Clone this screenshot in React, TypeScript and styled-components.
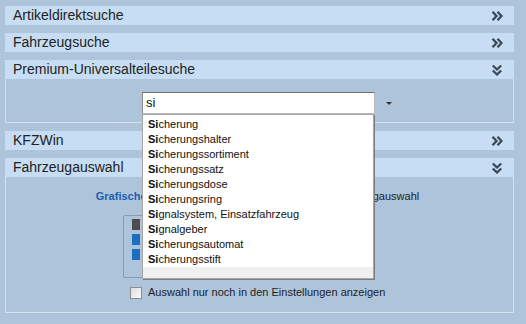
import styled, { createGlobalStyle } from "styled-components";

const Global = createGlobalStyle`
  html, body {
    margin: 0;
    padding: 0;
    background: #adc4db;
  }
  body {
    font-family: "Liberation Sans", Arial, sans-serif;
    color: #222;
  }
`;

const suggestions = [
  "Sicherung",
  "Sicherungshalter",
  "Sicherungssortiment",
  "Sicherungssatz",
  "Sicherungsdose",
  "Sicherungsring",
  "Signalsystem, Einsatzfahrzeug",
  "Signalgeber",
  "Sicherungsautomat",
  "Sicherungsstift",
];

const vehicles = [
  { color: "#4d4d4f", label: "PKW" },
  { color: "#1b6fbe", label: "Transporter" },
  { color: "#1b6fbe", label: "LKW" },
];

const Chevron = ({ open }: { open?: boolean }) => (
  <svg width="12" height="12" viewBox="0 0 12 12">
    <g
      fill="none"
      stroke="#3a4857"
      strokeWidth="2.3"
      transform={open ? "rotate(90 6 6)" : undefined}
    >
      <path d="M1.5 1.8 L5.5 6 L1.5 10.2" />
      <path d="M6.5 1.8 L10.5 6 L6.5 10.2" />
    </g>
  </svg>
);

const Section = ({
  title,
  open,
  children,
}: {
  title: string;
  open?: boolean;
  children?: React.ReactNode;
}) => (
  <div>
    <Header>
      <Title>{title}</Title>
      <Chevron open={open} />
    </Header>
    {open && children}
  </div>
);

const highlight = (text: string, query: string) => (
  <>
    <b>{text.slice(0, query.length)}</b>
    {text.slice(query.length)}
  </>
);

const App = () => {
  const query = "si";
  return (
    <>
      <Global />
      <Page>
        <Section title="Artikeldirektsuche" />
        <Section title="Fahrzeugsuche" />
        <Section title="Premium-Universalteilesuche" open>
          <SearchBody>
            <Combo>
              <Input>{query}</Input>
              <Arrow />
              <List>
                <Items>
                  {suggestions.map((s) => (
                    <Item key={s}>{highlight(s, query)}</Item>
                  ))}
                </Items>
                <ListFooter />
              </List>
            </Combo>
          </SearchBody>
        </Section>
        <Section title="KFZWin" />
        <Section title="Fahrzeugauswahl" open>
          <VehicleBody>
            <Tabs>
              <Tab active>Grafische Fahrzeugauswahl</Tab>
              <Tab>Textuelle Fahrzeugauswahl</Tab>
            </Tabs>
            <VehicleBox>
              {vehicles.map((v) => (
                <VehicleRow key={v.label}>
                  <Swatch color={v.color} />
                  {v.label}
                </VehicleRow>
              ))}
            </VehicleBox>
            <CheckRow>
              <Check />
              Auswahl nur noch in den Einstellungen anzeigen
            </CheckRow>
          </VehicleBody>
        </Section>
      </Page>
    </>
  );
};

export default App;

const Page = styled.div`
  width: 509px;
  padding: 6px 0 0 5px;
  display: flex;
  flex-direction: column;
  gap: 8px;
`;

const Header = styled.div`
  height: 19px;
  background: #c6ddf3;
  display: flex;
  align-items: center;
  justify-content: space-between;
  padding: 0 11px 0 8px;
`;

const Title = styled.span`
  font-size: 14px;
  line-height: 19px;
  color: #222;
`;

const SearchBody = styled.div`
  border: 1px solid #d3e2f1;
  border-top: none;
  padding: 13px 0 0 136px;
  box-sizing: border-box;
  height: 44px;
`;

const Combo = styled.div`
  position: relative;
  display: flex;
  align-items: center;
  width: 260px;
`;

const Input = styled.div`
  width: 228px;
  height: 20px;
  background: #fff;
  border: 1px solid #b9b9b9;
  border-top-color: #6f6f6f;
  border-left-color: #8a8a8a;
  font-size: 13px;
  line-height: 20px;
  padding-left: 3px;
  color: #111;
`;

const Arrow = styled.div`
  margin-left: 11px;
  width: 0;
  height: 0;
  border-left: 3px solid transparent;
  border-right: 3px solid transparent;
  border-top: 3px solid #333;
`;

const List = styled.div`
  position: absolute;
  top: 22px;
  left: 0;
  width: 230px;
  background: #fff;
  border: 1px solid #a5a5a5;
  box-shadow: 1px 1px 0 #7d7d7d;
  z-index: 2;
`;

const Items = styled.div`
  padding-top: 2px;
`;

const Item = styled.div`
  height: 15px;
  line-height: 15px;
  font-size: 11px;
  padding-left: 5px;
  color: #111;
  white-space: nowrap;

  b {
    font-weight: bold;
  }
`;

const ListFooter = styled.div`
  height: 11px;
  background: #f0f0f0;
`;

const VehicleBody = styled.div`
  border: 1px solid #d3e2f1;
  border-top: none;
  padding: 12px 0 13px 0;
  display: flex;
  flex-direction: column;
`;

const Tabs = styled.div`
  display: flex;
  justify-content: center;
  gap: 44px;
  height: 14px;
  padding-right: 4px;
`;

const Tab = styled.span<{ active?: boolean }>`
  font-size: 11px;
  line-height: 14px;
  font-weight: ${({ active }) => (active ? "bold" : "normal")};
  color: ${({ active }) => (active ? "#1f5fae" : "#222")};
`;

const VehicleBox = styled.div`
  margin: 12px 0 0 117px;
  width: 240px;
  height: 58px;
  border: 1px solid #8c9bab;
  border-radius: 2px;
  padding: 3px 0 0 8px;
  display: flex;
  flex-direction: column;
  gap: 4px;
`;

const VehicleRow = styled.div`
  display: flex;
  align-items: center;
  gap: 6px;
  font-size: 11px;
  height: 11px;
`;

const Swatch = styled.div<{ color: string }>`
  width: 8px;
  height: 11px;
  background: ${({ color }) => color};
`;

const CheckRow = styled.label`
  margin: 8px 0 0 124px;
  display: flex;
  align-items: center;
  gap: 6px;
  font-size: 11px;
  line-height: 13px;
  color: #222;
`;

const Check = styled.span`
  width: 10px;
  height: 10px;
  border: 1px solid #8e8e8e;
  background: linear-gradient(135deg, #dcdcdc, #fbfbfb);
`;
